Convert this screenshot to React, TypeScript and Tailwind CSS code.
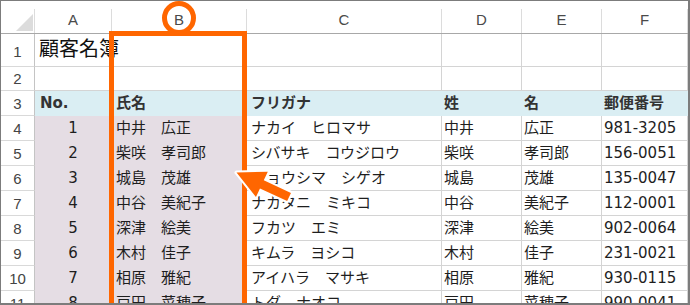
const rows = [
  ["1", "中井　広正", "ナカイ　ヒロマサ", "中井", "広正", "981-3205"],
  ["2", "柴咲　孝司郎", "シバサキ　コウジロウ", "柴咲", "孝司郎", "156-0051"],
  ["3", "城島　茂雄", "ジョウシマ　シゲオ", "城島", "茂雄", "135-0047"],
  ["4", "中谷　美紀子", "ナカタニ　ミキコ", "中谷", "美紀子", "112-0001"],
  ["5", "深津　絵美", "フカツ　エミ", "深津", "絵美", "902-0064"],
  ["6", "木村　佳子", "キムラ　ヨシコ", "木村", "佳子", "231-0021"],
  ["7", "相原　雅紀", "アイハラ　マサキ", "相原", "雅紀", "930-0115"],
  ["8", "戸田　菜穂子", "トダ　ナオコ", "戸田", "菜穂子", "990-0041"],
];

const grid = "grid grid-cols-[34px_77px_135px_195px_80px_80px_86px]";
const rowHead =
  "flex items-center justify-center border-r border-b border-r-[#c4c4c4] border-b-[#d9d9d9] font-['Liberation_Sans',sans-serif] text-[#444]";
const white = "flex items-center border-r border-b border-[#d4d4d4] whitespace-nowrap overflow-hidden";
const pink = "flex items-center border-r border-b border-[#e5dde4] bg-[#e5dde4] whitespace-nowrap";
const cyan = "flex items-center border-r border-b border-[#daeef3] bg-[#daeef3] font-bold text-[#333] whitespace-nowrap";

function ColHead({ label }: { label: string }) {
  return (
    <div className="flex h-[33px] items-end border-b border-[#a8a8a8]">
      <div className="flex h-[24px] w-full items-center justify-center border-r border-[#dcdcdc] pb-[3px] font-['Liberation_Sans',sans-serif] text-[#4a4a4a]">
        {label}
      </div>
    </div>
  );
}

export default function App() {
  return (
    <div className="relative h-[305px] w-[690px] overflow-hidden border-t border-l border-r-2 border-b-2 border-[#7c7c7c] bg-white font-['DejaVu_Sans','Noto_Sans_CJK_JP',sans-serif] text-[15px] leading-none text-[#1e1e1e]">
      <div className={grid}>
        <div className="flex h-[33px] items-end border-b border-[#a8a8a8]">
          <div className="flex h-[24px] w-full items-end justify-end border-r border-[#dcdcdc] pb-[2px] pr-[1px]">
            <svg width="17" height="17" viewBox="0 0 17 17">
              <polygon points="17,0 17,17 0,17" fill="#dcdcdc" />
            </svg>
          </div>
        </div>
        {["A", "B", "C", "D", "E", "F"].map((c) => (
          <ColHead key={c} label={c} />
        ))}
      </div>

      <div className={grid + " h-[33px]"}>
        <div className={rowHead + " pt-[2px]"}>1</div>
        <div className="flex items-center overflow-visible whitespace-nowrap border-b border-[#d4d4d4] pb-[3px] pl-[4px] text-[20px] text-[#111]">
          顧客名簿
        </div>
        <div className={white}></div>
        <div className={white}></div>
        <div className={white}></div>
        <div className={white}></div>
        <div className={white}></div>
      </div>

      <div className={grid + " h-[24px]"}>
        <div className={rowHead}>2</div>
        <div className={white}></div>
        <div className={white}></div>
        <div className={white}></div>
        <div className={white}></div>
        <div className={white}></div>
        <div className={white}></div>
      </div>

      <div className={grid + " h-[25px]"}>
        <div className={rowHead}>3</div>
        <div className={cyan + " pl-[5px]"}>No.</div>
        <div className={cyan + " pl-[4px]"}>氏名</div>
        <div className={cyan + " pl-[4px]"}>フリガナ</div>
        <div className={cyan + " pl-[2px]"}>姓</div>
        <div className={cyan + " pl-[2px]"}>名</div>
        <div className={cyan + " pl-[2px]"}>郵便番号</div>
      </div>

      {rows.map((r, i) => (
        <div key={r[0]} className={grid + " h-[25px]"}>
          <div className={rowHead}>{i + 4}</div>
          <div className={pink + " justify-center"}>{r[0]}</div>
          <div className={pink + " pl-[4px]"}>{r[1]}</div>
          <div className={white + " pl-[4px]"}>{r[2]}</div>
          <div className={white + " pl-[2px]"}>{r[3]}</div>
          <div className={white + " pl-[2px]"}>{r[4]}</div>
          <div className={white + " pl-[2px]"}>{r[5]}</div>
        </div>
      ))}

      <div className="pointer-events-none absolute left-[108px] top-[30px] h-[300px] w-[138px] border-[5px] border-[#ff6600]" />
      <div className="pointer-events-none absolute left-[161px] top-0 h-[34px] w-[34px] rounded-full border-[5px] border-[#ff6600]" />
      <svg className="pointer-events-none absolute left-0 top-0" width="688" height="302">
        <polygon
          points="0,0 28,-14 28,-4.5 58,-4.5 58,4.5 28,4.5 28,14"
          transform="translate(235.5 171.5) rotate(25)"
          fill="#ff6600"
          stroke="#ffffff"
          strokeWidth="4"
          strokeLinejoin="round"
          paintOrder="stroke"
        />
      </svg>
    </div>
  );
}
